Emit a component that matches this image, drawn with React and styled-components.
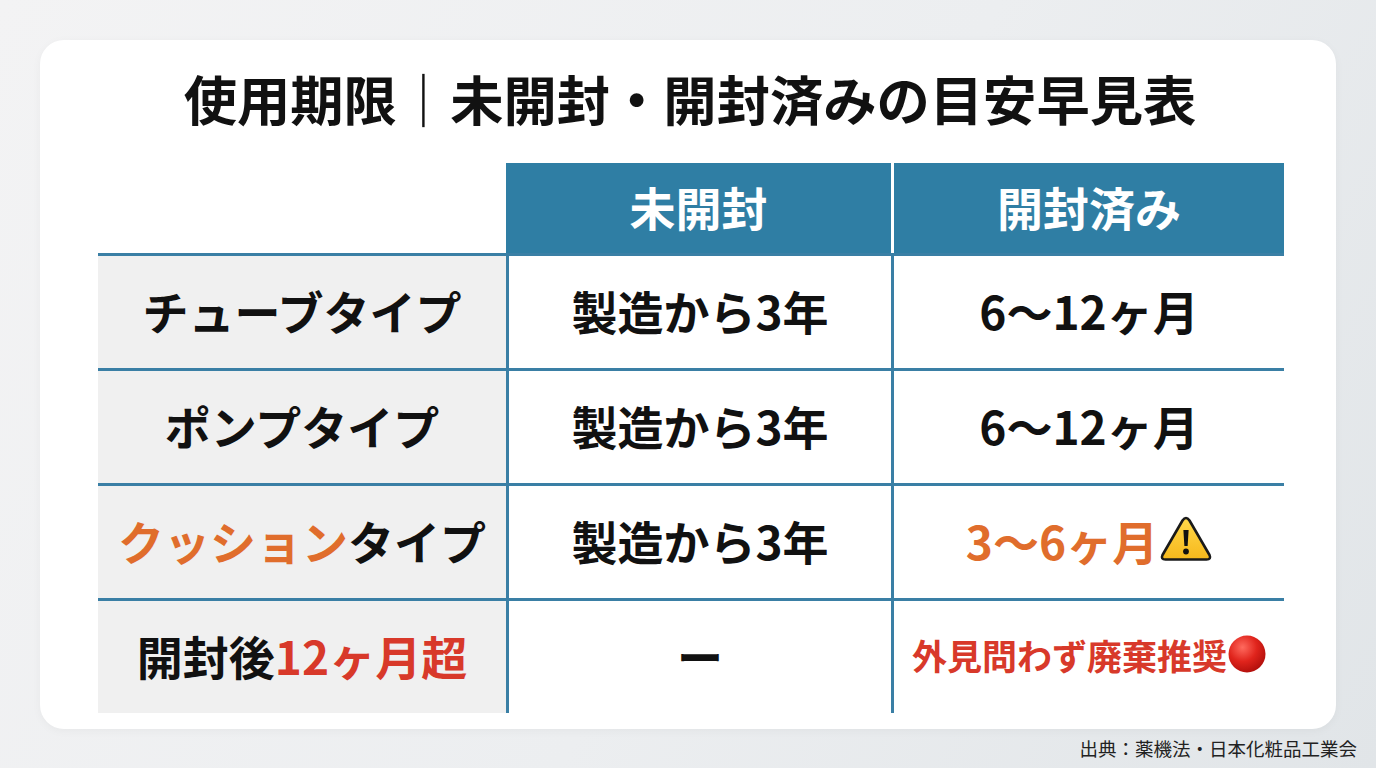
import React from 'react';
import styled, { createGlobalStyle } from 'styled-components';

const GlobalStyle = createGlobalStyle`
    html, body {
        margin: 0;
        padding: 0;
    }
    body {
        font-family: "Noto Sans CJK JP", "Noto Sans", sans-serif;
        color: #111;
    }
`;

const LINE = '#3a7fa5';
const HEAD = '#2f7ea4';
const ORANGE = '#e06d2c';
const RED = '#d8392a';

const rows = [
    { label: [{ text: 'チューブタイプ' }], unopened: '製造から3年', opened: '6〜12ヶ月' },
    { label: [{ text: 'ポンプタイプ' }], unopened: '製造から3年', opened: '6〜12ヶ月' },
    {
        label: [{ text: 'クッション', tone: 'orange' }, { text: 'タイプ' }],
        unopened: '製造から3年',
        opened: '3〜6ヶ月',
        openedTone: 'orange',
        icon: 'warning',
    },
    {
        label: [{ text: '開封後' }, { text: '12ヶ月超', tone: 'red' }],
        unopened: 'ー',
        opened: '外見問わず廃棄推奨',
        openedTone: 'red',
        small: true,
        icon: 'circle',
    },
];

function WarningIcon() {
    return (
        <svg width="52" height="46" viewBox="0 0 52 46" aria-hidden="true">
            <defs>
                <linearGradient id="warnFill" x1="0" y1="0" x2="0" y2="1">
                    <stop offset="0" stopColor="#ffd84a" />
                    <stop offset="1" stopColor="#f6b81c" />
                </linearGradient>
            </defs>
            <path
                d="M22.5 4.5 Q26 -0.5 29.5 4.5 L49.5 39 Q51.5 43.5 46.5 43.5 L5.5 43.5 Q0.5 43.5 2.5 39 Z"
                fill="url(#warnFill)"
                stroke="#1a1a1a"
                strokeWidth="2.6"
                strokeLinejoin="round"
            />
            <path d="M23.4 14 L28.6 14 L27.6 30 L24.4 30 Z" fill="#111" />
            <circle cx="26" cy="35.5" r="2.9" fill="#111" />
        </svg>
    );
}

function RedCircle() {
    return (
        <svg width="38" height="38" viewBox="0 0 38 38" aria-hidden="true">
            <defs>
                <radialGradient id="redFill" cx="0.38" cy="0.32" r="0.7">
                    <stop offset="0" stopColor="#ff6a5e" />
                    <stop offset="0.55" stopColor="#e0241c" />
                    <stop offset="1" stopColor="#b3100c" />
                </radialGradient>
            </defs>
            <circle cx="19" cy="19" r="18.5" fill="url(#redFill)" />
        </svg>
    );
}

function App() {
    return (
        <Page>
            <GlobalStyle />
            <Card>
                <Title>使用期限｜未開封・開封済みの目安早見表</Title>
                <Table>
                    <BlankHead />
                    <HeadCell>未開封</HeadCell>
                    <HeadCell $divider>開封済み</HeadCell>
                    {rows.map((row, i) => (
                        <React.Fragment key={i}>
                            <LabelCell>
                                {row.label.map((part, j) => (
                                    <Tone key={j} $tone={part.tone}>{part.text}</Tone>
                                ))}
                            </LabelCell>
                            <ValueCell>{row.unopened}</ValueCell>
                            <ValueCell $small={row.small}>
                                <Tone $tone={row.openedTone}>{row.opened}</Tone>
                                {row.icon === 'warning' && <IconWrap $gap={2}><WarningIcon /></IconWrap>}
                                {row.icon === 'circle' && <IconWrap $gap={1}><RedCircle /></IconWrap>}
                            </ValueCell>
                        </React.Fragment>
                    ))}
                </Table>
            </Card>
            <Source>出典：薬機法・日本化粧品工業会</Source>
        </Page>
    );
}

const Page = styled.div`
    width: 1376px;
    height: 768px;
    box-sizing: border-box;
    padding-top: 40px;
    display: flex;
    flex-direction: column;
    background: linear-gradient(120deg, #f3f3f4 0%, #eceef0 55%, #e1e5e8 100%);
    overflow: hidden;
`;

const Card = styled.div`
    margin: 0 40px;
    height: 689px;
    box-sizing: border-box;
    padding: 27px 52px 0 58px;
    background: #fff;
    border-radius: 24px;
    box-shadow: 0 2px 10px rgba(0, 0, 0, 0.04);
    display: flex;
    flex-direction: column;
`;

const Title = styled.h1`
    margin: 0 0 34px;
    height: 62px;
    line-height: 62px;
    text-align: center;
    font-size: 53.3px;
    font-weight: 700;
    color: #111;
    padding-right: 2px;
`;

const Table = styled.div`
    display: grid;
    grid-template-columns: 408px 385px 393px;
    grid-template-rows: 90px repeat(4, 115px);
`;

const BlankHead = styled.div`
    background: #fff;
`;

const HeadCell = styled.div`
    display: flex;
    align-items: center;
    justify-content: center;
    background: ${HEAD};
    color: #fff;
    font-size: 46px;
    font-weight: 700;
    border-left: ${(p) => (p.$divider ? '3px solid #fff' : '0')};
    padding-bottom: 4px;
    box-sizing: border-box;
`;

const LabelCell = styled.div`
    display: flex;
    align-items: center;
    justify-content: center;
    background: #f0f0f0;
    border-top: 3px solid ${LINE};
    padding-bottom: 5px;
    font-size: 46px;
    font-weight: 700;
    color: #111;
    white-space: nowrap;
`;

const ValueCell = styled.div`
    display: flex;
    align-items: center;
    justify-content: center;
    background: #fff;
    border-top: 3px solid ${LINE};
    border-left: 3px solid ${LINE};
    padding-bottom: 5px;
    font-size: ${(p) => (p.$small ? '35px' : '46px')};
    font-weight: 700;
    color: #111;
    white-space: nowrap;
`;

const Tone = styled.span`
    color: ${(p) => (p.$tone === 'orange' ? ORANGE : p.$tone === 'red' ? RED : 'inherit')};
`;

const IconWrap = styled.span`
    display: inline-flex;
    margin-left: ${(p) => p.$gap}px;
    margin-bottom: 2px;
`;

const Source = styled.div`
    padding: 8px 19px 0 0;
    text-align: right;
    font-size: 18.5px;
    font-weight: 400;
    color: #222;
    line-height: 22px;
`;

export default App;
